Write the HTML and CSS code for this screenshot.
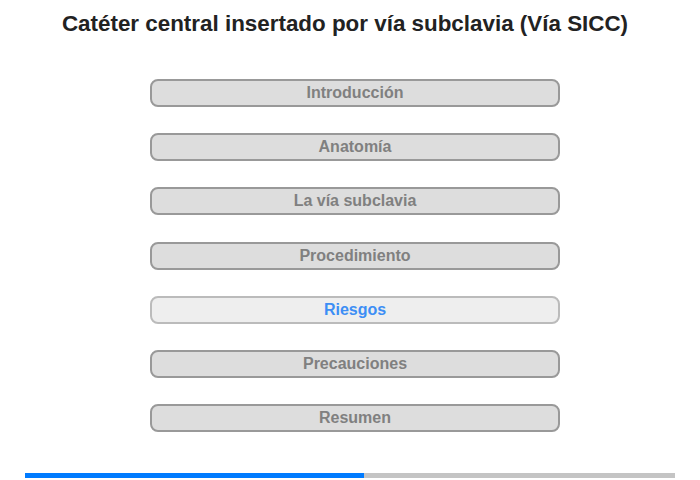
FILE: index.html
```html
<!DOCTYPE html>
<html lang="es">
<head>
<meta charset="utf-8">
<title>Catéter central insertado por vía subclavia</title>
<link rel="stylesheet" href="styles.css">
</head>
<body>
<div class="page">
  <h1 class="title">Catéter central insertado por vía subclavia (Vía SICC)</h1>
  <nav class="menu">
    <div class="item">Introducción</div>
    <div class="item">Anatomía</div>
    <div class="item">La vía subclavia</div>
    <div class="item">Procedimiento</div>
    <div class="item active">Riesgos</div>
    <div class="item">Precauciones</div>
    <div class="item">Resumen</div>
  </nav>
  <div class="progress"><div class="progress-fill" style="width: 52.2%"></div></div>
</div>
</body>
</html>
```
FILE: styles.css
```css
html, body {
  margin: 0;
  padding: 0;
  background: #fff;
}
.page {
  width: 700px;
  height: 480px;
  font-family: "Liberation Sans", Arial, sans-serif;
  display: flex;
  flex-direction: column;
}
.title {
  margin: 11px 0 0 0;
  font-size: 22.4px;
  font-weight: bold;
  color: #222;
  text-align: center;
  line-height: 26px;
  padding-right: 10px;
}
.menu {
  display: flex;
  flex-direction: column;
  gap: 26.2px;
  margin-top: 42px;
  padding-left: 150px;
}
.item {
  box-sizing: border-box;
  width: 410px;
  height: 28px;
  border: 2px solid #999;
  border-radius: 8px;
  background: #ddd;
  color: #808080;
  font-weight: bold;
  font-size: 16px;
  line-height: 24px;
  text-align: center;
}
.item.active {
  background: #eee;
  border-color: #bbb;
  color: #3d8ef5;
}
.progress {
  margin: 41px 0 0 25px;
  width: 650px;
  height: 5px;
  background: #c4c4c4;
}
.progress-fill {
  height: 100%;
  background: #007bff;
}
```
